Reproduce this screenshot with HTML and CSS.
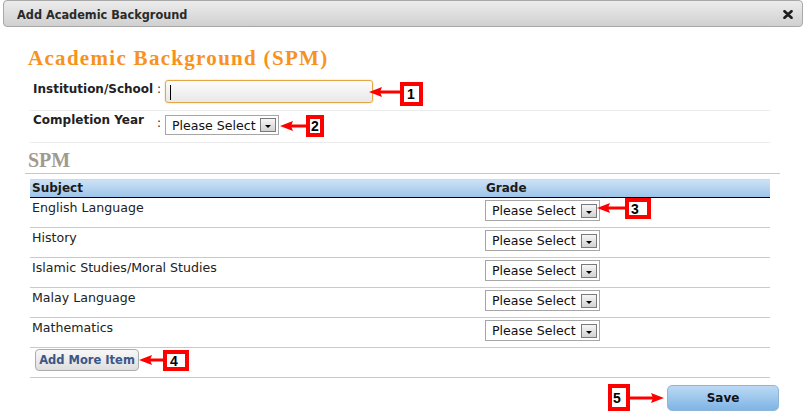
FILE: index.html
```html
<!DOCTYPE html>
<html>
<head>
<meta charset="utf-8">
<title>Add Academic Background</title>
<link rel="stylesheet" href="styles.css">
</head>
<body>
<div class="dialog">
  <div class="titlebar">
    <span class="title">Add Academic Background</span>
    <svg class="close" width="10" height="9" viewBox="0 0 10 9"><path d="M1.5 1.2 L8.5 7.8 M8.5 1.2 L1.5 7.8" stroke="#1e1e1e" stroke-width="2.6" stroke-linecap="round"/></svg>
  </div>

  <h1 class="heading">Academic Background (SPM)</h1>

  <div class="form">
    <div class="form-row">
      <span class="label">Institution/School</span>
      <span class="colon">:</span>
      <div class="textinput"><span class="caret"></span></div>
    </div>
    <div class="form-row row2">
      <span class="label">Completion Year</span>
      <span class="colon">:</span>
      <div class="select small"><span class="sel-text">Please Select</span><span class="dd"></span></div>
    </div>
  </div>

  <h2 class="subhead">SPM</h2>

  <div class="table">
    <div class="thead">
      <div class="c1">Subject</div>
      <div class="c2">Grade</div>
    </div>
    <div class="tr">
      <div class="c1">English Language</div>
      <div class="c2"><div class="select"><span class="sel-text">Please Select</span><span class="dd"></span></div></div>
    </div>
    <div class="tr">
      <div class="c1">History</div>
      <div class="c2"><div class="select"><span class="sel-text">Please Select</span><span class="dd"></span></div></div>
    </div>
    <div class="tr">
      <div class="c1">Islamic Studies/Moral Studies</div>
      <div class="c2"><div class="select"><span class="sel-text">Please Select</span><span class="dd"></span></div></div>
    </div>
    <div class="tr">
      <div class="c1">Malay Language</div>
      <div class="c2"><div class="select"><span class="sel-text">Please Select</span><span class="dd"></span></div></div>
    </div>
    <div class="tr">
      <div class="c1">Mathematics</div>
      <div class="c2"><div class="select"><span class="sel-text">Please Select</span><span class="dd"></span></div></div>
    </div>
    <div class="tr add-row">
      <button class="add-btn">Add More Item</button>
    </div>
  </div>

  <div class="footer">
    <button class="save">Save</button>
  </div>

  <!-- annotations -->
  <div class="tag t1">1</div>
  <svg class="arrow r1" width="31" height="12" viewBox="0 0 31 12"><polygon points="0,6 13,1 11,6 13,11" fill="#f00"/><rect x="10" y="4.5" width="21" height="3" fill="#f00"/></svg>
  <div class="tag t2">2</div>
  <svg class="arrow r2" width="26" height="12" viewBox="0 0 26 12"><polygon points="0,6 13,1 11,6 13,11" fill="#f00"/><rect x="10" y="4.5" width="16" height="3" fill="#f00"/></svg>
  <div class="tag t3">3</div>
  <svg class="arrow r3" width="28" height="12" viewBox="0 0 28 12"><polygon points="0,6 13,1 11,6 13,11" fill="#f00"/><rect x="10" y="4.5" width="18" height="3" fill="#f00"/></svg>
  <div class="tag t4">4</div>
  <svg class="arrow r4" width="24" height="12" viewBox="0 0 24 12"><polygon points="0,6 13,1 11,6 13,11" fill="#f00"/><rect x="10" y="4.5" width="14" height="3" fill="#f00"/></svg>
  <div class="tag t5">5</div>
  <svg class="arrow r5" width="34" height="12" viewBox="0 0 34 12"><polygon points="34,6 21,1 23,6 21,11" fill="#f00"/><rect x="0" y="4.5" width="24" height="3" fill="#f00"/></svg>
</div>
</body>
</html>
```

FILE: styles.css
```css
* { box-sizing: border-box; }
html, body { margin: 0; padding: 0; background: #fff; }
body {
  font-family: "DejaVu Sans", Verdana, sans-serif;
  font-size: 12.6px;
  color: #222;
}
.dialog {
  position: relative;
  width: 803px;
  height: 420px;
  overflow: hidden;
  background: #fff;
}

/* title bar */
.titlebar {
  margin-left: 3px;
  width: 800px;
  height: 27px;
  border: 1px solid #a8a8a8;
  border-radius: 4px;
  background: linear-gradient(#ececec, #d0d0d0);
  display: flex;
  align-items: center;
  justify-content: space-between;
  padding: 1px 9px 0 13px;
}
.title {
  font-family: "DejaVu Sans Condensed", "DejaVu Sans", sans-serif;
  font-weight: bold;
  font-size: 12.6px;
  color: #2a2a2a;
}
.close { display: block; }

/* heading */
.heading {
  margin: 17px 0 0 28px;
  height: 28px;
  font-family: "Liberation Serif", serif;
  font-weight: bold;
  font-size: 21px;
  line-height: 28px;
  letter-spacing: 1.3px;
  color: #f7921c;
}

/* form */
.form {
  margin: 7px 0 0 30px;
  width: 740px;
}
.form-row {
  display: flex;
  align-items: flex-start;
  height: 32px;
  border-bottom: 1px solid #ececec;
}
.label {
  width: 127px;
  padding: 3px 0 0 3px;
  font-weight: bold;
  font-size: 12px;
  color: #222;
}
.colon {
  width: 8px;
  padding-top: 3px;
  font-size: 12px;
}
.row2 .label { padding-top: 2px; }
.row2 .colon { padding-top: 5px; }
.textinput {
  position: relative;
  margin-top: 1px;
  width: 208px;
  height: 23px;
  border: 1px solid #e2a645;
  border-radius: 3px;
  background: linear-gradient(#fcfcfc, #e8e8e8);
  box-shadow: 0 0 2px #f4cf8e;
}
.caret {
  position: absolute;
  left: 4px;
  top: 4px;
  width: 1px;
  height: 15px;
  background: #000;
}

/* select */
.select {
  display: flex;
  align-items: center;
  justify-content: space-between;
  width: 115px;
  height: 21px;
  border: 1px solid #a6a6a6;
  background: #fff;
  padding: 0 2px 0 6px;
  color: #111;
}
.select.small {
  width: 114px;
  height: 20px;
  margin-top: 4px;
}
.sel-text { line-height: 15px; }
.dd {
  position: relative;
  width: 16px;
  height: 14px;
  border: 1px solid #7a7a7a;
  background: linear-gradient(#f6f6f6, #d2d2d2);
}
.dd::after {
  content: "";
  position: absolute;
  left: 4px;
  top: 6px;
  border-left: 3px solid transparent;
  border-right: 3px solid transparent;
  border-top: 3px solid #000;
}

/* SPM subheading */
.subhead {
  margin: 0 0 0 25px;
  width: 755px;
  height: 31px;
  border-bottom: 1px solid #c5c8d2;
  padding: 6px 0 0 3px;
  font-family: "Liberation Serif", serif;
  font-weight: bold;
  font-size: 20px;
  line-height: 22px;
  color: #a19a8d;
}

/* table */
.table {
  margin: 5px 0 0 30px;
  width: 740px;
}
.thead {
  display: flex;
  height: 19px;
  border-top: 1px solid #c3daf1;
  border-bottom: 1px solid #000;
  background: linear-gradient(#cde1f5, #9cc5ea);
  font-weight: bold;
  font-size: 12px;
  line-height: 17px;
  color: #1a1a1a;
}
.c1 { width: 454px; padding-left: 2px; }
.c2 { width: 286px; padding-left: 2px; }
.tr {
  display: flex;
  height: 30px;
  border-bottom: 1px solid #cacaca;
}
.tr .c1 { padding-top: 2px; }
.tr .c2 { padding-top: 2px; padding-left: 1px; }
.add-row { padding: 1px 0 0 5px; }
.add-btn {
  width: 104px;
  height: 22px;
  padding: 0;
  border: 1px solid #adadad;
  border-radius: 4px;
  background: linear-gradient(#f8f8f8, #dedede);
  font-family: "DejaVu Sans", Verdana, sans-serif;
  font-weight: bold;
  font-size: 11.5px;
  color: #3b5688;
}

/* footer */
.footer {
  display: flex;
  justify-content: flex-end;
  width: 779px;
  padding-top: 7px;
}
.save {
  width: 112px;
  height: 26px;
  padding: 0;
  border: 1px solid #8fb6da;
  border-radius: 5px;
  background: linear-gradient(#bcd9f4, #7fb4e4);
  font-family: "DejaVu Sans", Verdana, sans-serif;
  font-weight: bold;
  font-size: 12px;
  color: #111;
}

/* annotation overlays */
.tag {
  position: absolute;
  border: 4px solid #f00;
  background: #fff;
  font-family: "Liberation Sans", Arial, sans-serif;
  font-weight: bold;
  font-size: 14px;
  line-height: 14px;
  color: #000;
  display: flex;
  align-items: center;
}
.t1 { left: 400px; top: 82px; width: 23px; height: 24px; padding-left: 3px; }
.t2 { left: 306px; top: 115px; width: 18px; height: 22px; padding-left: 1px; }
.t3 { left: 625px; top: 198px; width: 26px; height: 21px; padding-left: 2px; }
.t4 { left: 163px; top: 350px; width: 26px; height: 21px; padding-left: 3px; }
.t5 { left: 608px; top: 384px; width: 22px; height: 27px; padding-left: 1px; }
.arrow { position: absolute; display: block; }
.r1 { left: 369px; top: 86px; }
.r2 { left: 280px; top: 120px; }
.r3 { left: 597px; top: 202px; }
.r4 { left: 139px; top: 354px; }
.r5 { left: 630px; top: 392px; }
```
